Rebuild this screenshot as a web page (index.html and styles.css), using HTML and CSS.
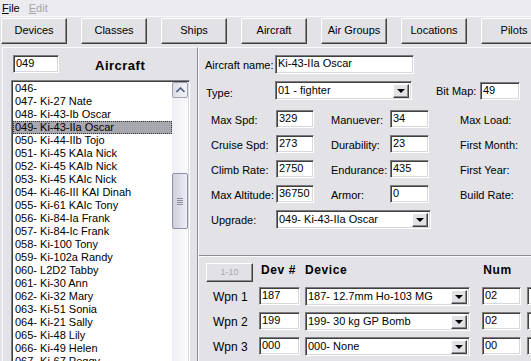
FILE: index.html
```html
<!DOCTYPE html>
<html lang="en">
<head>
  <meta charset="UTF-8">
  <title>Aircraft Editor</title>
  <link rel="stylesheet" href="styles.css">
</head>
<body>
  <!-- 菜单 -->
  <div class="menubar">
    <span class="menu"><u>F</u>ile</span>
    <span class="menu off"><u>E</u>dit</span>
  </div>
  <!-- 工具按钮 -->
  <div class="toolbar">
    <div class="tbtn">Devices</div>
    <div class="tbtn">Classes</div>
    <div class="tbtn">Ships</div>
    <div class="tbtn">Aircraft</div>
    <div class="tbtn">Air Groups</div>
    <div class="tbtn">Locations</div>
    <div class="tbtn">Pilots</div>
  </div>
  <div class="main">
    <!-- 左侧列表 -->
    <div class="leftpane">
      <div class="lefthead">
        <div class="field idbox">049</div>
        <div class="title">Aircraft</div>
      </div>
      <div class="listbox">
        <ul class="items">
          <li>046-</li>
          <li>047- Ki-27 Nate</li>
          <li>048- Ki-43-Ib Oscar</li>
          <li class="current">049- Ki-43-IIa Oscar</li>
          <li>050- Ki-44-IIb Tojo</li>
          <li>051- Ki-45 KAIa Nick</li>
          <li>052- Ki-45 KAIb Nick</li>
          <li>053- Ki-45 KAIc Nick</li>
          <li>054- Ki-46-III KAI Dinah</li>
          <li>055- Ki-61 KAIc Tony</li>
          <li>056- Ki-84-Ia Frank</li>
          <li>057- Ki-84-Ic Frank</li>
          <li>058- Ki-100 Tony</li>
          <li>059- Ki-102a Randy</li>
          <li>060- L2D2 Tabby</li>
          <li>061- Ki-30 Ann</li>
          <li>062- Ki-32 Mary</li>
          <li>063- Ki-51 Sonia</li>
          <li>064- Ki-21 Sally</li>
          <li>065- Ki-48 Lily</li>
          <li>066- Ki-49 Helen</li>
          <li>067- Ki-67 Peggy</li>
        </ul>
        <div class="vscroll">
          <div class="sbup">
            <svg width="9" height="6" viewBox="0 0 9 6"><path d="M0.5 5 L4.5 1 L8.5 5" fill="none" stroke="#4d6185" stroke-width="1.6"/></svg>
          </div>
          <div class="sbthumb"><span></span><span></span><span></span><span></span></div>
        </div>
      </div>
    </div>
    <!-- 右侧属性 -->
    <div class="rightpane">
      <div class="props">
        <div class="row namerow">
          <label class="lbl w70">Aircraft name:</label>
          <div class="field wname">Ki-43-IIa Oscar</div>
        </div>
        <div class="row typerow">
          <label class="lbl w69">Type:</label>
          <div class="field select wtype">01 - fighter<span class="drop"></span></div>
          <label class="lbl bitlbl">Bit Map:</label>
          <div class="field wbit">49</div>
        </div>
        <div class="stats">
          <div class="row stat">
            <label class="lbl c1">Max Spd:</label><div class="field f1">329</div>
            <label class="lbl c2">Manuever:</label><div class="field f2">34</div>
            <label class="lbl c3">Max Load:</label>
          </div>
          <div class="row stat">
            <label class="lbl c1">Cruise Spd:</label><div class="field f1">273</div>
            <label class="lbl c2">Durability:</label><div class="field f2">23</div>
            <label class="lbl c3">First Month:</label>
          </div>
          <div class="row stat">
            <label class="lbl c1">Climb Rate:</label><div class="field f1">2750</div>
            <label class="lbl c2">Endurance:</label><div class="field f2">435</div>
            <label class="lbl c3">First Year:</label>
          </div>
          <div class="row stat">
            <label class="lbl c1">Max Altitude:</label><div class="field f1">36750</div>
            <label class="lbl c2">Armor:</label><div class="field f2">0</div>
            <label class="lbl c3">Build Rate:</label>
          </div>
          <div class="row stat">
            <label class="lbl c1">Upgrade:</label>
            <div class="field select wup">049- Ki-43-IIa Oscar<span class="drop"></span></div>
          </div>
        </div>
      </div>
      <!-- 武器挂载 -->
      <div class="loadout">
        <div class="row headrow">
          <div class="tbtn pagebtn">1-10</div>
          <div class="hdr hdev">Dev #</div>
          <div class="hdr hname">Device</div>
          <div class="hdr hnum">Num</div>
        </div>
        <div class="row wpn">
          <label class="lbl wl">Wpn 1</label>
          <div class="field dev">187</div>
          <div class="field select devsel">187- 12.7mm Ho-103 MG<span class="drop"></span></div>
          <div class="field num">02</div>
          <div class="field more"></div>
        </div>
        <div class="row wpn">
          <label class="lbl wl">Wpn 2</label>
          <div class="field dev">199</div>
          <div class="field select devsel">199- 30 kg GP Bomb<span class="drop"></span></div>
          <div class="field num">02</div>
          <div class="field more"></div>
        </div>
        <div class="row wpn">
          <label class="lbl wl">Wpn 3</label>
          <div class="field dev">000</div>
          <div class="field select devsel">000- None<span class="drop"></span></div>
          <div class="field num">00</div>
          <div class="field more"></div>
        </div>
        <!-- 第4行只露出边框 -->
        <div class="row wpn">
          <label class="lbl wl"></label>
          <div class="field dev"></div>
          <div class="field select devsel"><span class="drop"></span></div>
          <div class="field num"></div>
          <div class="field more"></div>
        </div>
      </div>
    </div>
  </div>
</body>
</html>
```

FILE: styles.css
```css
/* 清除默认样式 */
* {
  margin: 0;
  padding: 0;
  box-sizing: border-box;
}
ul {
  list-style: none;
}
body {
  width: 531px;
  height: 361px;
  overflow: hidden;
  background-color: #e2e2e7;
  font: 11px "Liberation Sans", Arial, sans-serif;
  color: #000;
}
/* 菜单 */
.menubar {
  display: flex;
  gap: 9px;
  height: 17px;
  padding: 1px 0 0 2px;
  background-color: #ecebef;
  border-bottom: 1px solid #fafafc;
  line-height: 14px;
}
.menu.off {
  color: #a4a4aa;
}
/* 工具按钮 */
.toolbar {
  display: flex;
  gap: 14px;
  height: 30px;
  padding: 1px 0 0 1px;
}
.tbtn {
  flex: none;
  width: 66px;
  height: 26px;
  line-height: 22px;
  text-align: center;
  background-color: #e2e2e6;
  border: 1px solid;
  border-color: #fff #404040 #404040 #fff;
  box-shadow: inset -1px -1px #8c8c90;
}
/* 主体 */
.main {
  display: flex;
  height: 314px;
  padding-left: 2px;
}
.leftpane {
  flex: none;
  width: 196px;
  padding: 6px 0 0 8px;
  border-top: 1px solid #fafafc;
  border-left: 1px solid #fafafc;
  border-right: 1px solid #8c8c92;
}
.lefthead {
  display: flex;
  align-items: center;
  height: 20px;
}
.idbox {
  width: 46px;
  margin-left: 2px;
}
.title {
  margin-left: 36px;
  font-size: 13px;
  font-weight: bold;
  letter-spacing: 0.5px;
  padding-top: 3px;
}
/* 列表 */
.listbox {
  display: flex;
  width: 179px;
  height: 290px;
  margin-top: 6px;
  background-color: #fff;
  border: 1px solid;
  border-color: #808084 #fff #fff #808084;
  box-shadow: inset 1px 1px #404040, inset -1px -1px #d8d8dc;
}
.items {
  flex: 1;
  padding: 1px 0 0 1px;
  overflow: hidden;
}
.items li {
  height: 13px;
  line-height: 13px;
  padding-left: 2px;
  white-space: nowrap;
}
.items .current {
  background-color: #a7a7ae;
  outline: 1px dotted #303030;
  outline-offset: -1px;
}
.vscroll {
  flex: none;
  width: 16px;
  margin: 1px 1px 0 0;
  background: linear-gradient(to right, #eeeef4, #fbfbfd);
}
.sbup {
  height: 16px;
  display: flex;
  align-items: center;
  justify-content: center;
  background: linear-gradient(to right, #dcdce6, #f4f4f8);
  border: 1px solid #9ea0b4;
  border-radius: 2px;
}
.sbthumb {
  display: flex;
  flex-direction: column;
  align-items: center;
  justify-content: center;
  gap: 1px;
  height: 56px;
  margin-top: 75px;
  background: linear-gradient(to right, #cfcfdd, #eeeef6);
  border: 1px solid #8e90a4;
  border-radius: 2px;
}
.sbthumb span {
  width: 6px;
  height: 1px;
  background-color: #8a8c9e;
}
/* 右侧 */
.rightpane {
  flex: 1;
  border-top: 1px solid #fafafc;
  border-left: 1px solid #fafafc;
}
.props {
  height: 208px;
  padding-top: 7px;
  border-bottom: 1px solid #8c8c92;
}
.row {
  display: flex;
  align-items: center;
}
.lbl {
  flex: none;
  white-space: nowrap;
}
.field {
  flex: none;
  position: relative;
  height: 18px;
  padding: 1px 2px;
  line-height: 13px;
  background-color: #fff;
  border: 1px solid;
  border-color: #7c7c80 #fff #fff #7c7c80;
  box-shadow: inset 1px 1px #404040, inset -1px -1px #d8d8dc;
  white-space: nowrap;
  overflow: hidden;
}
.select {
  height: 19px;
  padding-top: 2px;
}
.drop {
  position: absolute;
  right: 2px;
  top: 2px;
  width: 16px;
  height: 14px;
  background-color: #e2e2e6;
  border: 1px solid;
  border-color: #fff #404040 #404040 #fff;
  box-shadow: inset -1px -1px #8c8c90;
}
.drop::after {
  content: "";
  position: absolute;
  left: 3px;
  top: 4px;
  border-top: 4px solid #000;
  border-left: 4px solid transparent;
  border-right: 4px solid transparent;
}
.namerow {
  padding-left: 6px;
}
.w70 {
  width: 70px;
}
.wname {
  width: 139px;
  height: 19px;
}
.typerow {
  margin-top: 7px;
  padding-left: 7px;
}
.w69 {
  width: 69px;
  padding-top: 4px;
}
.wtype {
  width: 137px;
}
.bitlbl {
  width: 44px;
  margin-left: 24px;
}
.wbit {
  width: 40px;
}
.stats {
  margin-top: 10px;
  padding-left: 12px;
}
.stat {
  height: 25px;
  align-items: flex-start;
}
.stat .lbl {
  padding-top: 4px;
}
.c1 {
  width: 65px;
}
.f1 {
  width: 38px;
}
.c2 {
  width: 59px;
  margin-left: 17px;
}
.f2 {
  width: 39px;
}
.c3 {
  margin-left: 31px;
}
.wup {
  width: 155px;
}
/* 武器 */
.loadout {
  border-top: 1px solid #fafafc;
  padding: 6px 0 0 7px;
}
.pagebtn {
  width: 47px;
  height: 19px;
  line-height: 16px;
  font-size: 9px;
  color: #a8a8ae;
}
.hdr {
  font-size: 12px;
  font-weight: bold;
  letter-spacing: 0.6px;
}
.hdev {
  margin-left: 8px;
}
.hname {
  margin-left: 9px;
}
.hnum {
  margin-left: 136px;
}
.wpn {
  height: 25px;
  align-items: flex-start;
}
.headrow {
  height: 24px;
  align-items: flex-start;
}
.wl {
  width: 46px;
  margin-left: 7px;
  font-size: 12px;
  padding-top: 3px;
}
.dev {
  width: 41px;
}
.devsel {
  width: 165px;
  margin-left: 5px;
}
.num {
  width: 39px;
  margin-left: 12px;
}
.more {
  width: 30px;
  margin-left: 6px;
}
```
